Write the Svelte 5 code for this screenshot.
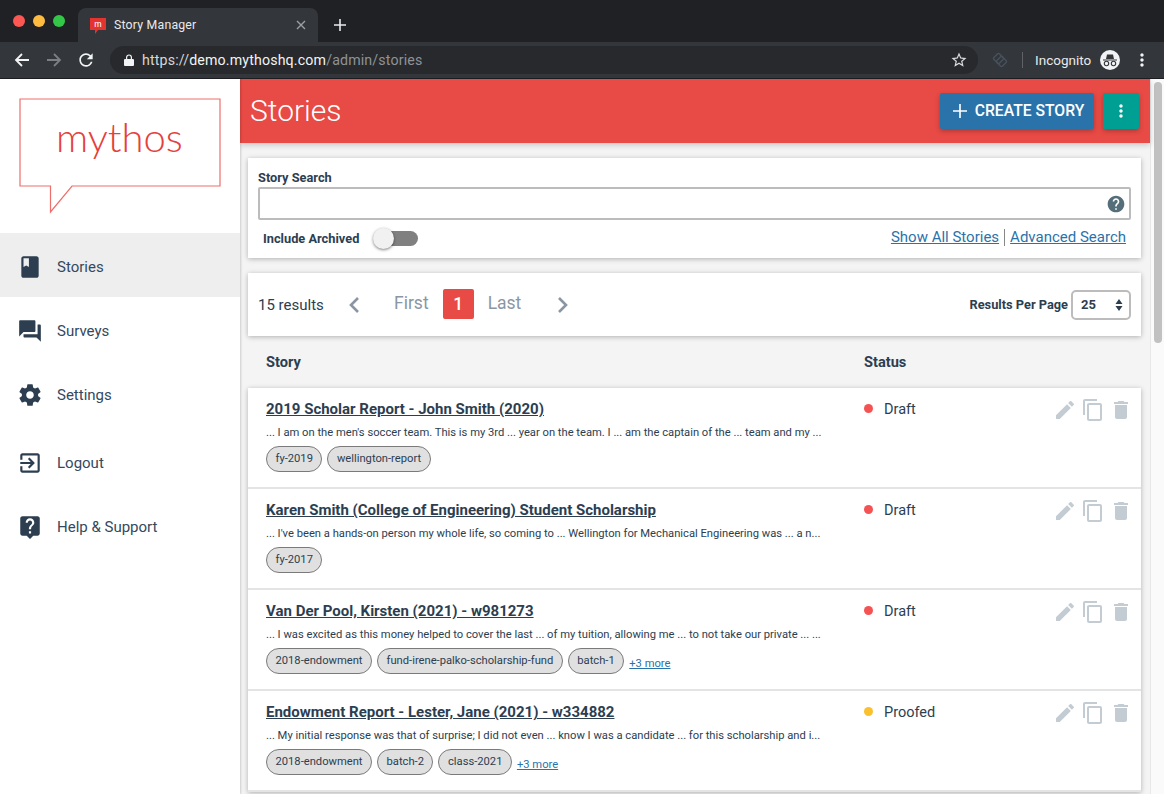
<script>
  const nav = [
    { label: "Stories", icon: "M18 2H6c-1.1 0-2 .9-2 2v16c0 1.1.9 2 2 2h12c1.1 0 2-.9 2-2V4c0-1.1-.9-2-2-2zM6 4h5v8l-2.5-1.5L6 12V4z", active: true },
    { label: "Surveys", icon: "M21 6h-2v9H6v2c0 .55.45 1 1 1h11l4 4V7c0-.55-.45-1-1-1zm-4 6V3c0-.55-.45-1-1-1H3c-.55 0-1 .45-1 1v14l4-4h10c.55 0 1-.45 1-1z" },
    { label: "Settings", icon: "M19.43 12.98c.04-.32.07-.64.07-.98s-.03-.66-.07-.98l2.11-1.65c.19-.15.24-.42.12-.64l-2-3.46c-.12-.22-.39-.3-.61-.22l-2.49 1c-.52-.4-1.08-.73-1.69-.98l-.38-2.65C14.46 2.18 14.25 2 14 2h-4c-.25 0-.46.18-.49.42l-.38 2.65c-.61.25-1.17.59-1.69.98l-2.49-1c-.23-.09-.49 0-.61.22l-2 3.46c-.13.22-.07.49.12.64l2.11 1.65c-.04.32-.07.65-.07.98s.03.66.07.98l-2.11 1.65c-.19.15-.24.42-.12.64l2 3.46c.12.22.39.3.61.22l2.49-1c.52.4 1.08.73 1.69.98l.38 2.65c.03.24.24.42.49.42h4c.25 0 .46-.18.49-.42l.38-2.65c.61-.25 1.17-.59 1.69-.98l2.49 1c.23.09.49 0 .61-.22l2-3.46c.12-.22.07-.49-.12-.64l-2.11-1.65zM12 15.5c-1.93 0-3.5-1.57-3.5-3.5s1.57-3.5 3.5-3.5 3.5 1.57 3.5 3.5-1.57 3.5-3.5 3.5z" },
    { label: "Logout", gap: true, icon: "M10.09 15.59L11.5 17l5-5-5-5-1.41 1.41L12.67 11H3v2h9.67l-2.58 2.59zM19 3H5c-1.11 0-2 .9-2 2v4h2V5h14v14H5v-4H3v4c0 1.1.89 2 2 2h14c1.1 0 2-.9 2-2V5c0-1.1-.9-2-2-2z" },
    { label: "Help & Support", icon: "M19 2H5c-1.11 0-2 .9-2 2v14c0 1.1.89 2 2 2h4l3 3 3-3h4c1.1 0 2-.9 2-2V4c0-1.1-.9-2-2-2zm-6 16h-2v-2h2v2zm2.07-7.75l-.9.92C13.45 11.9 13 12.5 13 14h-2v-.5c0-1.1.45-2.1 1.17-2.83l1.24-1.26c.37-.36.59-.86.59-1.41 0-1.1-.9-2-2-2s-2 .9-2 2H8c0-2.21 1.79-4 4-4s4 1.79 4 4c0 .88-.36 1.68-.93 2.25z" },
  ];

  const stories = [
    {
      title: "2019 Scholar Report - John Smith (2020)",
      excerpt: "... I am on the men's soccer team. This is my 3rd ... year on the team. I ... am the captain of the ... team and my ...",
      status: "Draft",
      tags: ["fy-2019", "wellington-report"],
    },
    {
      title: "Karen Smith (College of Engineering) Student Scholarship",
      excerpt: "... I've been a hands-on person my whole life, so coming to ... Wellington for Mechanical Engineering was ... a n...",
      status: "Draft",
      tags: ["fy-2017"],
    },
    {
      title: "Van Der Pool, Kirsten (2021) - w981273",
      excerpt: "... I was excited as this money helped to cover the last ... of my tuition, allowing me ... to not take our private ... ...",
      status: "Draft",
      tags: ["2018-endowment", "fund-irene-palko-scholarship-fund", "batch-1"],
      more: 3,
    },
    {
      title: "Endowment Report - Lester, Jane (2021) - w334882",
      excerpt: "... My initial response was that of surprise; I did not even ... know I was a candidate ... for this scholarship and i...",
      status: "Proofed",
      tags: ["2018-endowment", "batch-2", "class-2021"],
      more: 3,
    },
  ];

  const dots = "M12 8c1.1 0 2-.9 2-2s-.9-2-2-2-2 .9-2 2 .9 2 2 2zm0 2c-1.1 0-2 .9-2 2s.9 2 2 2 2-.9 2-2-.9-2-2-2zm0 6c-1.1 0-2 .9-2 2s.9 2 2 2 2-.9 2-2-.9-2-2-2z";
</script>

<div class="chrome">
  <div class="tabstrip">
    <div class="lights">
      <span class="light red"></span>
      <span class="light yellow"></span>
      <span class="light green"></span>
    </div>
    <div class="tab">
      <svg class="favicon" viewBox="0 0 16 17" width="16" height="17">
        <path d="M0 0h16v12H8l-3 4v-4H0z" fill="#e5342f" />
        <text x="8" y="9" text-anchor="middle" fill="#fff" font-size="9" font-family="Lato, sans-serif">m</text>
      </svg>
      <span class="tab-title">Story Manager</span>
      <svg class="tab-close" viewBox="0 0 10 10" width="10" height="10">
        <path d="M1 1l8 8M9 1l-8 8" stroke="#9aa0a6" stroke-width="1.4" fill="none" />
      </svg>
    </div>
    <svg class="newtab" viewBox="0 0 12 12" width="12" height="12">
      <path d="M6 0v12M0 6h12" stroke="#e8eaed" stroke-width="1.6" fill="none" />
    </svg>
  </div>
  <div class="toolbar">
    <svg class="tool" viewBox="0 0 16 16" width="16" height="16"><path d="M15 8H2M8 2L2 8l6 6" stroke="#f1f3f4" stroke-width="1.8" fill="none" /></svg>
    <svg class="tool dim" viewBox="0 0 16 16" width="16" height="16"><path d="M1 8h13M8 2l6 6-6 6" stroke="#7c7f83" stroke-width="1.8" fill="none" /></svg>
    <svg class="tool" viewBox="0 0 24 24" width="20" height="20"><path d="M17.65 6.35A7.958 7.958 0 0 0 12 4c-4.42 0-7.99 3.58-7.99 8s3.57 8 7.99 8c3.73 0 6.84-2.55 7.73-6h-2.08A5.99 5.99 0 0 1 12 18c-3.31 0-6-2.69-6-6s2.69-6 6-6c1.66 0 3.14.69 4.22 1.78L13 11h7V4l-2.35 2.35z" fill="#f1f3f4" /></svg>
    <div class="omnibox">
      <svg viewBox="0 0 10 12" width="10" height="12"><path d="M1 5h8a1 1 0 0 1 1 1v5a1 1 0 0 1-1 1H1a1 1 0 0 1-1-1V6a1 1 0 0 1 1-1z" fill="#f1f3f4" /><path d="M2.6 5V3.4a2.4 2.4 0 0 1 4.8 0V5" stroke="#f1f3f4" stroke-width="1.2" fill="none" /></svg>
      <span class="url"><span class="scheme">https://</span>demo.mythoshq.com<span class="path">/admin/stories</span></span>
      <svg class="star" viewBox="0 0 24 24" width="18" height="18"><path d="M22 9.24l-7.19-.62L12 2 9.19 8.63 2 9.24l5.46 4.73L5.82 21 12 17.27 18.18 21l-1.63-7.03L22 9.24zM12 15.4l-3.76 2.27 1-4.28-3.32-2.88 4.38-.38L12 6.1l1.71 4.04 4.38.38-3.32 2.88 1 4.28L12 15.4z" fill="#dadce0" /></svg>
    </div>
    <svg class="ext" viewBox="0 0 18 18" width="18" height="18" fill="none" stroke="#47525d" stroke-width="1.4">
      <rect x="3.500" y="3.500" width="8" height="8" rx="1.500" transform="rotate(45 7.500 7.500)" />
      <rect x="6.500" y="6.500" width="8" height="8" rx="1.500" transform="rotate(45 10.500 10.500)" />
    </svg>
    <span class="tool-sep"></span>
    <span class="incognito">Incognito</span>
    <svg class="spy" viewBox="0 0 20 20" width="20" height="20">
      <circle cx="10" cy="10" r="10" fill="#f1f3f4" />
      <path d="M3 9.500h14v1H3zM6 9l1-4.500h6L14 9z" fill="#35363a" />
      <circle cx="6.500" cy="13.500" r="2.200" fill="none" stroke="#35363a" stroke-width="1.100" />
      <circle cx="13.500" cy="13.500" r="2.200" fill="none" stroke="#35363a" stroke-width="1.100" />
    </svg>
    <svg class="menu" viewBox="0 0 24 24" width="20" height="20"><path d={dots} fill="#f1f3f4" /></svg>
  </div>
</div>

<div class="app">
  <aside class="sidebar">
    <div class="logo">
      <svg viewBox="0 0 203 116" width="203" height="116">
        <path d="M1 1h200v87H53L31.500 114V88H1z" fill="none" stroke="#ee6e6a" stroke-width="1.200" />
      </svg>
      <span class="wordmark">mythos</span>
    </div>
    <nav>
      {#each nav as item}
        <div class="nav-item" class:active={item.active} class:gap={item.gap}>
          <svg viewBox="0 0 24 24" width="26" height="26"><path d={item.icon} /></svg>
          <span>{item.label}</span>
        </div>
      {/each}
    </nav>
  </aside>

  <main>
    <header class="page-head">
      <h1>Stories</h1>
      <div class="head-actions">
        <button class="create">
          <svg viewBox="0 0 12 12" width="12" height="12"><path d="M6 0v12M0 6h12" stroke="#fff" stroke-width="1.400" fill="none" /></svg>
          CREATE STORY
        </button>
        <button class="more-btn">
          <svg viewBox="0 0 24 24" width="20" height="20"><path d={dots} fill="#fff" /></svg>
        </button>
      </div>
    </header>

    <section class="card search">
      <div class="search-label">Story Search</div>
      <div class="search-box">
        <svg viewBox="0 0 24 24" width="20" height="20"><path d="M12 2C6.480 2 2 6.480 2 12s4.480 10 10 10 10-4.480 10-10S17.520 2 12 2zm1 17h-2v-2h2v2zm2.070-7.750l-.9.920C13.450 12.900 13 13.500 13 15h-2v-.5c0-1.100.45-2.100 1.170-2.830l1.240-1.260c.37-.36.59-.86.59-1.410 0-1.100-.9-2-2-2s-2 .9-2 2H8c0-2.210 1.790-4 4-4s4 1.790 4 4c0 .88-.36 1.680-.93 2.250z" fill="#546e7a" /></svg>
      </div>
      <div class="search-foot">
        <div class="archived">
          <span>Include Archived</span>
          <span class="switch"><span class="knob"></span></span>
        </div>
        <div class="links">
          <a href="#all">Show All Stories</a>
          <span class="link-sep"></span>
          <a href="#advanced">Advanced Search</a>
        </div>
      </div>
    </section>

    <section class="card pager">
      <span class="count">15 results</span>
      <svg class="chev" viewBox="0 0 12 18" width="12" height="18"><path d="M10 2L3 9l7 7" stroke="#8a96a3" stroke-width="2.600" fill="none" /></svg>
      <span class="page-word first">First</span>
      <span class="page-num">1</span>
      <span class="page-word last">Last</span>
      <svg class="chev" viewBox="0 0 12 18" width="12" height="18"><path d="M2 2l7 7-7 7" stroke="#8a96a3" stroke-width="2.600" fill="none" /></svg>
      <div class="per-page">
        <span>Results Per Page</span>
        <div class="select">
          25
          <svg viewBox="0 0 8 14" width="8" height="14"><path d="M4 1l3.500 5h-7zM4 13L.5 8h7z" fill="#2c3e50" /></svg>
        </div>
      </div>
    </section>

    <div class="table-head">
      <span class="col-story">Story</span>
      <span>Status</span>
    </div>

    <div class="rows">
      {#each stories as story}
        <article class="row">
          <div class="row-main">
            <a class="row-title" href="#story">{story.title}</a>
            <p>{story.excerpt}</p>
            <div class="tags">
              {#each story.tags as tag}
                <span class="tag">{tag}</span>
              {/each}
              {#if story.more}
                <a class="more" href="#more">+{story.more} more</a>
              {/if}
            </div>
          </div>
          <div class="row-status">
            <span class="dot" class:proofed={story.status === "Proofed"}></span>
            {story.status}
          </div>
          <div class="row-actions">
            <svg viewBox="0 0 24 24" width="24" height="24"><path d="M3 17.250V21h3.750L17.810 9.940l-3.750-3.750L3 17.250zM20.710 7.040c.39-.39.39-1.020 0-1.410l-2.340-2.340c-.39-.39-1.020-.39-1.410 0l-1.830 1.830 3.750 3.750 1.830-1.830z" /></svg>
            <svg viewBox="0 0 24 24" width="24" height="24"><path d="M16 1H4c-1.100 0-2 .9-2 2v14h2V3h12V1zm3 4H8c-1.100 0-2 .9-2 2v14c0 1.100.9 2 2 2h11c1.100 0 2-.9 2-2V7c0-1.100-.9-2-2-2zm0 16H8V7h11v14z" /></svg>
            <svg viewBox="0 0 24 24" width="24" height="24"><path d="M6 19c0 1.100.9 2 2 2h8c1.100 0 2-.9 2-2V7H6v12zM19 4h-3.500l-1-1h-5l-1 1H5v2h14V4z" /></svg>
          </div>
        </article>
      {/each}
    </div>
  </main>

  <div class="scrollbar"><span class="thumb"></span></div>
</div>

<style>
  :global(body) {
    margin: 0;
    height: 794px;
    overflow: hidden;
    font-family: Roboto, "Liberation Sans", sans-serif;
    color: #2c3e50;
    background: #fff;
  }

  /* browser frame */
  .chrome {
    height: 79px;
    background: #33363a;
    border-bottom: 1px solid #1c1d20;
    box-sizing: border-box;
  }

  .tabstrip {
    height: 42px;
    background: #202124;
    display: flex;
    align-items: flex-end;
    box-sizing: border-box;
  }

  .lights {
    display: flex;
    gap: 8px;
    align-self: flex-start;
    padding: 15px 0 0 13px;
    width: 78px;
    box-sizing: border-box;
  }

  .light {
    width: 12px;
    height: 12px;
    border-radius: 50%;
  }

  .red { background: #fc5753; }
  .yellow { background: #fdbc40; }
  .green { background: #33c748; }

  .tab {
    width: 240px;
    height: 34px;
    background: #33363a;
    border-radius: 8px 8px 0 0;
    display: flex;
    align-items: center;
    padding: 0 12px;
    box-sizing: border-box;
  }

  .favicon {
    margin-right: 8px;
    margin-top: 2px;
  }

  .tab-title {
    flex: 1;
    font-size: 12.300px;
    color: #e8eaed;
    letter-spacing: 0.2px;
  }

  .newtab {
    margin: 0 0 11px 16px;
  }

  .toolbar {
    height: 36px;
    display: flex;
    align-items: center;
    position: relative;
  }

  .tool {
    margin-left: 14px;
  }

  .tool.dim {
    margin-left: 16px;
  }

  .omnibox {
    margin-left: 14px;
    width: 868px;
    height: 28px;
    border-radius: 14px;
    background: #27292d;
    display: flex;
    align-items: center;
    padding: 0 10px 0 14px;
    box-sizing: border-box;
  }

  .url {
    flex: 1;
    margin-left: 8px;
    font-size: 14.200px;
    color: #f1f3f4;
    letter-spacing: 0.15px;
  }

  .scheme { color: #d4d6d9; }
  .path { color: #8f9296; }

  .ext { margin-left: 13px; }

  .tool-sep {
    width: 1px;
    height: 16px;
    background: #5f6368;
    margin: 0 12px 0 13px;
  }

  .incognito {
    font-size: 13.500px;
    color: #e8eaed;
  }

  .spy { margin-left: 9px; }
  .menu { margin-left: 12px; }

  /* app */
  .app {
    display: flex;
    height: 715px;
    overflow: hidden;
  }

  .sidebar {
    width: 240px;
    flex: none;
    background: #fff;
    box-shadow: 1px 0 2px rgba(0, 0, 0, 0.16);
    position: relative;
    z-index: 2;
  }

  .logo {
    height: 154px;
    padding: 19px 0 0 19px;
    box-sizing: border-box;
    position: relative;
  }

  .wordmark {
    position: absolute;
    left: 56px;
    top: 32px;
    font-family: Lato, sans-serif;
    font-weight: 300;
    font-size: 40px;
    line-height: 52px;
    color: #e5403b;
  }

  .nav-item {
    height: 64px;
    display: flex;
    align-items: center;
    padding: 4px 0 0 17px;
    box-sizing: border-box;
    font-size: 15px;
    color: #34495e;
  }

  .nav-item.active { background: #eeeeee; }
  .nav-item.gap { margin-top: 4px; }

  .nav-item svg {
    fill: #2c3e50;
    margin-right: 14px;
  }

  main {
    width: 910px;
    flex: none;
    background: #f4f4f4;
  }

  .page-head {
    height: 64px;
    background: #e84a45;
    display: flex;
    align-items: center;
    justify-content: space-between;
    padding: 0 11px 2px 10px;
    box-sizing: border-box;
    box-shadow: 0 2px 6px rgba(0, 0, 0, 0.2);
    position: relative;
  }

  h1 {
    margin: 0;
    font-size: 30px;
    font-weight: 300;
    color: #fff;
  }

  .head-actions {
    display: flex;
    gap: 9px;
    margin-top: 1px;
  }

  button {
    height: 36px;
    border: none;
    border-radius: 2px;
    color: #fff;
    font-family: inherit;
    box-shadow: 0 2px 5px rgba(0, 0, 0, 0.26);
    display: flex;
    align-items: center;
    justify-content: center;
  }

  .create {
    width: 154px;
    background: #2a73aa;
    font-size: 15.700px;
    font-weight: 500;
    gap: 8px;
    padding: 0 0 0 3px;
  }

  .create svg {
    width: 14px;
    height: 14px;
  }

  .more-btn {
    width: 36px;
    background: #009f94;
    padding: 0;
  }

  .card {
    background: #fff;
    margin: 0 9px 0 8px;
    box-shadow: 0 1px 5px rgba(0, 0, 0, 0.28);
  }

  .search {
    margin-top: 15px;
    height: 100px;
    padding: 12px 10px 0;
    box-sizing: border-box;
  }

  .search-label {
    font-size: 12.800px;
    font-weight: 700;
    line-height: 15px;
    margin: 0 0 3px;
  }

  .search-box {
    height: 33px;
    margin-top: -1px;
    border: 2px solid #bcbcbc;
    border-radius: 2px;
    box-sizing: border-box;
    display: flex;
    align-items: center;
    justify-content: flex-end;
    padding-right: 3px;
  }

  .search-foot {
    display: flex;
    justify-content: space-between;
    align-items: center;
    margin-top: 8px;
  }

  .archived {
    display: flex;
    align-items: center;
    margin-left: 5px;
    margin-top: 2px;
    font-size: 12.800px;
    font-weight: 700;
  }

  .switch {
    width: 36px;
    height: 15px;
    border-radius: 8px;
    background: #808080;
    margin-left: 23px;
    position: relative;
  }

  .knob {
    position: absolute;
    left: -9px;
    top: -3px;
    width: 21px;
    height: 21px;
    border-radius: 50%;
    background: #f1f1f1;
    box-shadow: 0 1px 3px rgba(0, 0, 0, 0.5);
  }

  .links {
    display: flex;
    align-items: center;
    margin-right: 5px;
    font-size: 15px;
  }

  .links a,
  .more {
    color: #2a73aa;
  }

  .link-sep {
    width: 1px;
    height: 17px;
    background: #888;
    margin: 0 5px;
  }

  .pager {
    margin-top: 15px;
    height: 63px;
    display: flex;
    align-items: center;
    padding: 0 10px;
    box-sizing: border-box;
  }

  .count {
    font-size: 15px;
    width: 90px;
  }

  .page-word {
    font-size: 17.500px;
    color: #8a96a3;
  }

  .first { margin: -4px 0 0 34px; }
  .last { margin: -4px 36px 0 14px; }

  .page-num {
    width: 31px;
    height: 30px;
    margin: -2px 0 0 14px;
    background: #e84a45;
    border-radius: 2px;
    color: #fff;
    font-size: 17.500px;
    font-weight: 500;
    text-align: center;
    line-height: 30px;
  }

  .per-page {
    margin-left: auto;
    display: flex;
    align-items: center;
    gap: 3px;
    font-size: 12.800px;
    font-weight: 700;
  }

  .select {
    width: 60px;
    height: 30px;
    border: 2px solid #bcbcbc;
    border-radius: 5px;
    box-sizing: border-box;
    display: flex;
    align-items: center;
    justify-content: space-between;
    padding: 0 6px 0 8px;
    font-size: 13px;
  }

  .table-head {
    height: 52px;
    display: flex;
    align-items: center;
    font-size: 14.600px;
    font-weight: 700;
    margin: 0 9px 0 8px;
  }

  .col-story {
    margin-left: 18px;
    width: 598px;
  }

  .rows {
    margin: 0 9px 0 8px;
    background: #fff;
    box-shadow: 0 1px 5px rgba(0, 0, 0, 0.28);
  }

  .row {
    height: 101px;
    display: flex;
    border-bottom: 2px solid #e4e4e4;
    box-sizing: border-box;
    padding: 11px 0 0 18px;
  }

  .row-main {
    width: 598px;
    flex: none;
  }

  .row-title {
    display: block;
    font-size: 15px;
    font-weight: 700;
    line-height: 20px;
    color: #2c3e50;
  }

  p {
    margin: 6px 0 6px;
    font-size: 11.200px;
    line-height: 15px;
    color: #2c3e50;
    white-space: nowrap;
  }

  .tags {
    display: flex;
    align-items: center;
    gap: 5px;
  }

  .tag {
    height: 26px;
    line-height: 23px;
    padding: 0 8.500px;
    border: 1px solid #7a7a7a;
    border-radius: 13px;
    background: #e0e0e0;
    box-sizing: border-box;
    font-size: 11.200px;
  }

  .more {
    font-size: 11.200px;
    margin-top: 4px;
  }

  .row-status {
    width: 189px;
    flex: none;
    display: flex;
    align-items: flex-start;
    font-size: 14.500px;
    line-height: 20px;
    padding-top: 1px;
  }

  .dot {
    width: 9px;
    height: 9px;
    border-radius: 50%;
    background: #f55353;
    margin: 4px 11px 0 0;
  }

  .dot.proofed { background: #fbc02d; }

  .row-actions {
    display: flex;
    margin-top: -1px;
    height: 24px;
    gap: 4px;
  }

  .row-actions svg {
    fill: #c3ccd2;
    flex: none;
  }

  .scrollbar {
    flex: 1;
    background: #fafafa;
    border-left: 1px solid #e8e8e8;
    padding-left: 3px;
  }

  .thumb {
    display: block;
    width: 8px;
    height: 261px;
    margin-top: 3px;
    background: #c1c1c1;
    border-radius: 4px;
  }
</style>
